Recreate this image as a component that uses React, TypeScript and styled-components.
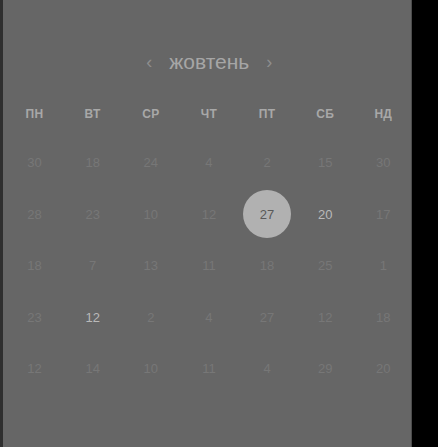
import React from "react";
import styled, { createGlobalStyle } from "styled-components";

const Global = createGlobalStyle`
  html, body { margin: 0; padding: 0; background: #000; }
  body { font-family: "Liberation Sans", Arial, sans-serif; }
`;

const Screen = styled.div`
  display: flex;
  width: 438px;
  height: 447px;
  background: #000;
  overflow: hidden;
`;

const LeftEdge = styled.div`
  width: 3px;
  background: #2f2f2f;
`;

const RightEdge = styled.div`
  width: 1px;
  background: #4c4c4c;
`;

const Panel = styled.div`
  width: 408px;
  background: #666666;
  padding: 48px 0 0 2.5px;
  box-sizing: border-box;
  display: flex;
  flex-direction: column;
`;

const TitleRow = styled.div`
  display: flex;
  align-items: center;
  justify-content: center;
  height: 28px;
  gap: 17px;
  margin-left: 2px;
`;

const Chevron = styled.span`
  color: #8e8e8e;
  font-size: 18px;
  line-height: 1;
`;

const Month = styled.span`
  color: #a6a6a6;
  font-size: 21px;
  line-height: 28px;
`;

const Grid = styled.div`
  display: grid;
  grid-template-columns: repeat(7, 58.14px);
`;

const WeekRow = styled(Grid)`
  margin-top: 28px;
  height: 20px;
  align-items: center;
`;

const WeekDay = styled.div`
  text-align: center;
  color: #a8a8a8;
  font-size: 12px;
  font-weight: bold;
  letter-spacing: 0.3px;
`;

const DaysGrid = styled(Grid)`
  margin-top: 13px;
  grid-auto-rows: 51.5px;
`;

const Cell = styled.div`
  display: flex;
  align-items: center;
  justify-content: center;
`;

const Day = styled.div<{ $tone: "dim" | "bright" | "selected" }>`
  width: 48px;
  height: 48px;
  border-radius: 50%;
  display: flex;
  align-items: center;
  justify-content: center;
  font-size: 13px;
  background: ${(p) => (p.$tone === "selected" ? "#b1b1b1" : "transparent")};
  color: ${(p) =>
    p.$tone === "selected" ? "#595959" : p.$tone === "bright" ? "#b9b9b9" : "#777777"};
`;

const weekDays = ["ПН", "ВТ", "СР", "ЧТ", "ПТ", "СБ", "НД"];

const rows: number[][] = [
  [30, 18, 24, 4, 2, 15, 30],
  [28, 23, 10, 12, 27, 20, 17],
  [18, 7, 13, 11, 18, 25, 1],
  [23, 12, 2, 4, 27, 12, 18],
  [12, 14, 10, 11, 4, 29, 20],
];

const toneFor = (r: number, c: number): "dim" | "bright" | "selected" => {
  if (r === 1 && c === 4) return "selected";
  if ((r === 1 && c === 5) || (r === 3 && c === 1)) return "bright";
  return "dim";
};

export default function App() {
  return (
    <>
      <Global />
      <Screen>
        <LeftEdge />
        <Panel>
          <TitleRow>
            <Chevron>‹</Chevron>
            <Month>жовтень</Month>
            <Chevron>›</Chevron>
          </TitleRow>
          <WeekRow>
            {weekDays.map((d) => (
              <WeekDay key={d}>{d}</WeekDay>
            ))}
          </WeekRow>
          <DaysGrid>
            {rows.map((row, r) =>
              row.map((n, c) => (
                <Cell key={`${r}-${c}`}>
                  <Day $tone={toneFor(r, c)}>{n}</Day>
                </Cell>
              ))
            )}
          </DaysGrid>
        </Panel>
        <RightEdge />
      </Screen>
    </>
  );
}
